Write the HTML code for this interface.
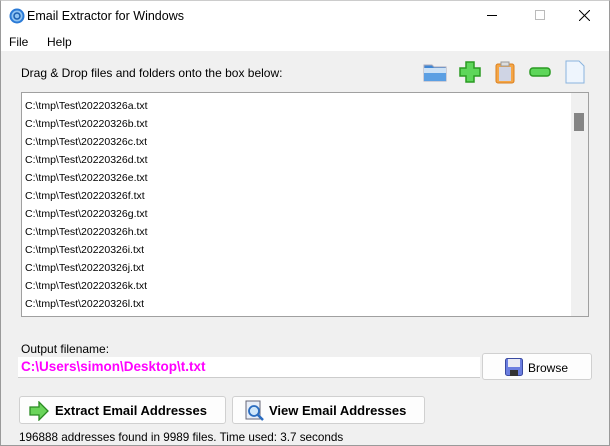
<!DOCTYPE html>
<html><head><style>
*{box-sizing:border-box;margin:0;padding:0}
body{width:610px;height:446px;overflow:hidden;font-family:"Liberation Sans",sans-serif;font-size:12px;color:#000;background:#f0f0f0;position:relative}
.win{position:absolute;left:0;top:0;width:610px;height:446px;border:1px solid #9a9a9a;border-top-color:#ccc}
.title{position:absolute;left:0;top:0;width:608px;height:30px;background:#fff}
.menu{position:absolute;left:0;top:30px;width:608px;height:20px;background:#fff}
.abs{position:absolute;white-space:nowrap}
.list{position:absolute;left:20px;top:91px;width:568px;height:225px;background:#fff;border:1px solid #a0a0a0}
.row{position:absolute;left:3px;font-size:10.5px}
.btn{position:absolute;background:#fdfdfd;border:1px solid #d0d0d0;border-radius:3px}
</style></head><body>
<div class="win">
<div class="title">
<svg class="abs" style="left:8px;top:7px" width="16" height="16" viewBox="0 0 16 16"><circle cx="8" cy="8" r="7.5" fill="#2a7ad6"/><circle cx="8" cy="8" r="5.5" fill="#8fc3f2"/><circle cx="8" cy="8" r="3" fill="none" stroke="#1a5fb0" stroke-width="1.5"/></svg>
<div class="abs" style="left:26px;top:8px;font-size:12.5px">Email Extractor for Windows</div>
<div class="abs" style="left:486px;top:14px;width:10px;height:1px;background:#000"></div>
<div class="abs" style="left:534px;top:9px;width:10px;height:10px;border:1px solid #bbb"></div>
<svg class="abs" style="left:578px;top:9px" width="11" height="11"><path d="M0 0L11 11M11 0L0 11" stroke="#000"/></svg>
</div>
<div class="menu">
<div class="abs" style="left:8px;top:4px">File</div>
<div class="abs" style="left:46px;top:4px">Help</div>
</div>
<div class="abs" style="left:20px;top:65px">Drag &amp; Drop files and folders onto the box below:</div>
<svg class="abs" style="left:422px;top:61px" width="24" height="20"><path d="M1 3h8l2 2h12v14H1z" fill="#3f86d4" stroke="#aab"/><rect x="1" y="6" width="22" height="13" fill="#5b9fe3"/><rect x="1" y="6" width="22" height="5" fill="#cde2f6"/></svg>
<svg class="abs" style="left:458px;top:60px" width="22" height="22"><path d="M7 1h8v6h6v8h-6v6H7v-6H1V7h6z" fill="#5ed65a" stroke="#2a9a22" stroke-width="1.5"/></svg>
<svg class="abs" style="left:494px;top:59px" width="20" height="24"><rect x="1" y="4" width="18" height="19" rx="2" fill="#f5a646" stroke="#d98020"/><rect x="4" y="7" width="12" height="14" fill="#cfd4e4"/><rect x="6" y="2" width="8" height="4" fill="#ddd" stroke="#999"/></svg>
<svg class="abs" style="left:528px;top:66px" width="22" height="10"><rect x="1" y="1" width="20" height="8" rx="3" fill="#5ed65a" stroke="#2a9a22" stroke-width="1.5"/></svg>
<svg class="abs" style="left:564px;top:59px" width="20" height="24"><path d="M1 1h13l5 5v17H1z" fill="#eef5fd" stroke="#8ab4de"/></svg>
<div class="list">
<div class="row" style="top:7px">C:\tmp\Test\20220326a.txt</div>
<div class="row" style="top:25px">C:\tmp\Test\20220326b.txt</div>
<div class="row" style="top:43px">C:\tmp\Test\20220326c.txt</div>
<div class="row" style="top:61px">C:\tmp\Test\20220326d.txt</div>
<div class="row" style="top:79px">C:\tmp\Test\20220326e.txt</div>
<div class="row" style="top:97px">C:\tmp\Test\20220326f.txt</div>
<div class="row" style="top:115px">C:\tmp\Test\20220326g.txt</div>
<div class="row" style="top:133px">C:\tmp\Test\20220326h.txt</div>
<div class="row" style="top:151px">C:\tmp\Test\20220326i.txt</div>
<div class="row" style="top:169px">C:\tmp\Test\20220326j.txt</div>
<div class="row" style="top:187px">C:\tmp\Test\20220326k.txt</div>
<div class="row" style="top:205px">C:\tmp\Test\20220326l.txt</div>
<div class="abs" style="left:549px;top:0;width:17px;height:223px;background:#f0f0f0"></div>
<div class="abs" style="left:552px;top:20px;width:10px;height:18px;background:#858585"></div>
</div>
<div class="abs" style="left:20px;top:341px">Output filename:</div>
<div class="abs" style="left:17px;top:356px;width:462px;height:21px;background:#fff;border-bottom:1px solid #ccc"></div>
<div class="abs" style="left:20px;top:358px;font-size:13.5px;font-weight:bold;color:#ff00ff">C:\Users\simon\Desktop\t.txt</div>
<div class="btn" style="left:481px;top:352px;width:110px;height:27px">
<svg class="abs" style="left:22px;top:4px" width="18" height="18"><rect x="0.5" y="0.5" width="17" height="17" rx="2" fill="#6b7ee0" stroke="#3a4aa0"/><rect x="3" y="1" width="12" height="8" fill="#e8eaf4"/><rect x="5" y="12" width="8" height="6" fill="#333"/></svg>
<div class="abs" style="left:45px;top:7px">Browse</div>
</div>
<div class="btn" style="left:18px;top:395px;width:207px;height:28px">
<svg class="abs" style="left:9px;top:4px" width="20" height="20"><path d="M1 6h9V1l9 9-9 9v-5H1z" fill="#6ad45a" stroke="#2a8a22" stroke-width="1.3"/></svg>
<div class="abs" style="left:35px;top:6px;font-size:13px;font-weight:bold">Extract Email Addresses</div>
</div>
<div class="btn" style="left:231px;top:395px;width:193px;height:28px">
<svg class="abs" style="left:11px;top:3px" width="22" height="22"><rect x="2" y="1" width="14" height="18" fill="#e8eef8" stroke="#667"/><circle cx="10" cy="11" r="5" fill="#cfe6fa" stroke="#2a6cc0" stroke-width="1.8"/><path d="M14 15l5 5" stroke="#2a6cc0" stroke-width="2.5"/></svg>
<div class="abs" style="left:36px;top:6px;font-size:13px;font-weight:bold">View Email Addresses</div>
</div>
<div class="abs" style="left:18px;top:430px;font-size:11.7px">196888 addresses found in 9989 files. Time used: 3.7 seconds</div>
</div>
</body></html>
